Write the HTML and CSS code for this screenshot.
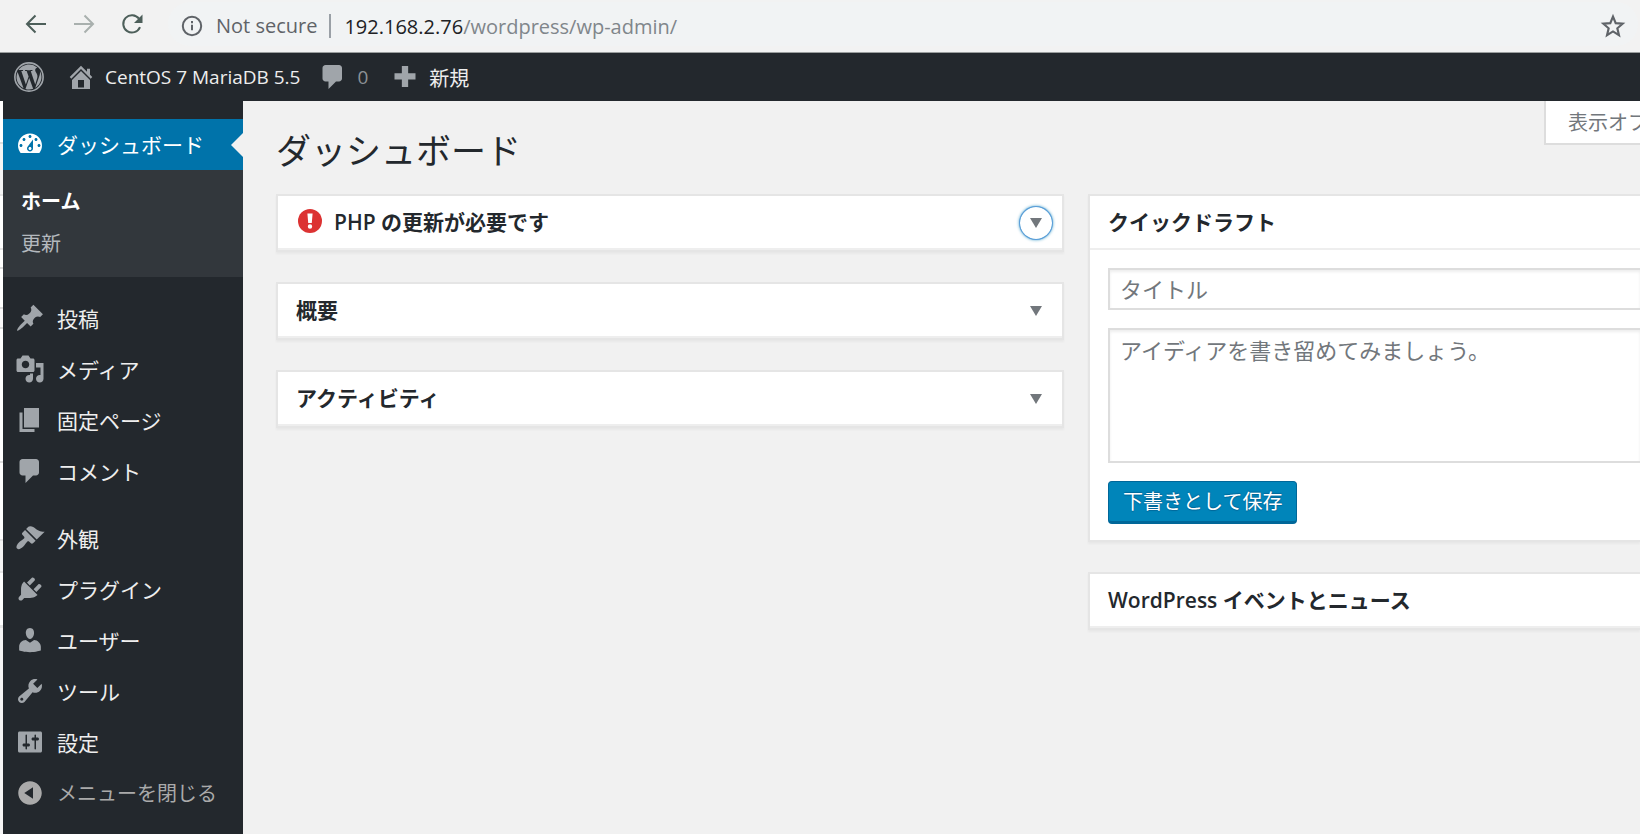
FILE: index.html
```html
<!DOCTYPE html>
<html lang="ja">
<head>
<meta charset="utf-8">
<title>ダッシュボード</title>
<link rel="stylesheet" href="styles.css">
</head>
<body>
<header class="browser">
  <div class="browser-nav">
    <button class="nav-btn" aria-label="Back"><svg viewBox="0 0 24 24"><path d="M22 12H3M11.500 3.500L3 12l8.500 8.500"/></svg></button>
    <button class="nav-btn nav-off" aria-label="Forward"><svg viewBox="0 0 24 24"><path d="M2 12h19M12.500 3.500L21 12l-8.500 8.500"/></svg></button>
    <button class="nav-btn" aria-label="Reload"><svg viewBox="0 0 24 24"><path d="M20 15.200A8.700 8.700 0 1 1 19 6.700"/><path class="solid" d="M22.500 2.500v8.500h-8.500z"/></svg></button>
  </div>
  <div class="omnibox">
    <svg class="info" viewBox="0 0 22 22"><circle cx="11" cy="11" r="9.200"/><path d="M11 9.800v5.400M11 6v2.300"/></svg>
    <span class="secure">Not secure</span>
    <span class="url"><b>192.168.2.76</b>/wordpress/wp-admin/</span>
    <button class="star" aria-label="Bookmark"><svg viewBox="0 0 24 24"><path d="M12 3.400l2.500 6 6.400.5-4.900 4.200 1.500 6.300-5.500-3.400-5.500 3.400 1.500-6.300-4.900-4.200 6.400-.5z"/></svg></button>
  </div>
</header>

<nav class="adminbar">
  <a href="#" class="bar-item" aria-label="WordPress"><svg class="icon wp" viewBox="0 0 24 24"><circle cx="12" cy="12" r="11.300"/><path transform="translate(.9 .9) scale(.925)" d="M21.469 6.825c.84 1.537 1.318 3.3 1.318 5.175 0 3.979-2.156 7.456-5.363 9.325l3.295-9.527c.615-1.54.82-2.771.82-3.864 0-.405-.026-.78-.07-1.11m-7.981.105c.647-.03 1.232-.105 1.232-.105.582-.075.514-.93-.067-.899 0 0-1.755.135-2.88.135-1.064 0-2.85-.15-2.85-.15-.585-.03-.661.855-.075.885 0 0 .54.061 1.125.09l1.68 4.605-2.37 7.08L5.354 6.9c.649-.03 1.234-.1 1.234-.1.585-.075.516-.93-.065-.896 0 0-1.746.138-2.874.138-.2 0-.438-.008-.69-.015C4.911 3.15 8.235 1.215 12 1.215c2.809 0 5.365 1.072 7.286 2.833-.046-.003-.091-.009-.141-.009-1.06 0-1.812.923-1.812 1.914 0 .89.513 1.643 1.06 2.531.411.72.89 1.643.89 2.977 0 .915-.354 1.994-.821 3.479l-1.075 3.585-3.9-11.61.001.014zM12 22.784c-1.059 0-2.081-.153-3.048-.437l3.237-9.406 3.315 9.087c.024.053.05.101.078.149-1.12.393-2.325.609-3.582.609M1.211 12c0-1.564.336-3.05.935-4.39L7.29 21.709C3.694 19.96 1.212 16.271 1.211 12"/></svg></a>
  <a href="#" class="bar-item site"><svg class="icon" viewBox="0 0 20 20"><path d="M16 8.500l1.530 1.530-1.060 1.060L10 4.600l-6.470 6.490-1.060-1.060L10 2.500l4 4v-2h2v4zm-6-2.460l6 5.990V18H4v-5.970zM12 17v-5H8v5h4z"/></svg>CentOS 7 MariaDB 5.5</a>
  <a href="#" class="bar-item count"><svg class="icon" viewBox="0 0 20 20"><path d="M5 2h9c1.100 0 2 .9 2 2v7c0 1.100-.9 2-2 2h-2l-5 5v-5H5c-1.100 0-2-.9-2-2V4c0-1.100.9-2 2-2z"/></svg>0</a>
  <a href="#" class="bar-item new"><svg class="icon" viewBox="0 0 20 20"><path d="M17 7.500v4.200h-4.900v4.900H7.900v-4.900H3V7.500h4.900V2.700h4.200v4.800z"/></svg>新規</a>
</nav>

<div class="shell">
  <nav class="menu">
    <a href="#" class="menu-item current"><svg class="icon" viewBox="0 0 20 20"><path d="M3.760 16h12.480c1.100-1.370 1.760-3.110 1.760-5 0-4.420-3.580-8-8-8s-8 3.580-8 8c0 1.890.66 3.630 1.760 5zM10 4c.55 0 1 .45 1 1s-.45 1-1 1-1-.45-1-1 .45-1 1-1zM6 6c.55 0 1 .45 1 1s-.45 1-1 1-1-.45-1-1 .45-1 1-1zm8 0c.55 0 1 .45 1 1s-.45 1-1 1-1-.45-1-1 .45-1 1-1zm-5.370 5.550L12 7v6c0 1.100-.9 2-2 2s-2-.9-2-2c0-.57.24-1.080.63-1.450zM4 10c.55 0 1 .45 1 1s-.45 1-1 1-1-.45-1-1 .45-1 1-1zm12 0c.55 0 1 .45 1 1s-.45 1-1 1-1-.45-1-1 .45-1 1-1zm-5 3c0-.55-.45-1-1-1s-1 .45-1 1 .45 1 1 1 1-.45 1-1z" fill-rule="evenodd"/></svg>ダッシュボード</a>
    <div class="submenu">
      <a href="#" class="sub-item sub-current">ホーム</a>
      <a href="#" class="sub-item">更新</a>
    </div>
    <div class="group">
      <a href="#" class="menu-item"><svg class="icon" viewBox="0 0 20 20"><path d="M10.440 3.020l1.820-1.820 6.360 6.350-1.830 1.820c-1.050-.68-2.480-.57-3.410.36l-.75.75c-.92.93-1.040 2.350-.35 3.410l-1.830 1.820-2.410-2.410-2.800 2.790c-.42.42-3.380 2.710-3.800 2.290s1.860-3.390 2.280-3.810l2.790-2.790L4.100 9.360l1.830-1.820c1.050.69 2.480.57 3.400-.36l.75-.75c.93-.92 1.050-2.350.36-3.410z"/></svg>投稿</a>
      <a href="#" class="menu-item"><svg class="icon" viewBox="0 0 20 20"><path fill-rule="evenodd" d="M13 11V4c0-.55-.45-1-1-1h-1.670L9 1H5L3.670 3H2c-.55 0-1 .45-1 1v7c0 .55.45 1 1 1h10c.55 0 1-.45 1-1zM7 4.500c1.380 0 2.500 1.120 2.500 2.500S8.380 9.500 7 9.500 4.500 8.380 4.500 7 5.620 4.500 7 4.500zM14 6h5v10.500c0 1.380-1.120 2.500-2.500 2.500S14 17.880 14 16.500s1.120-2.500 2.500-2.500c.17 0 .34.02.5.05V9h-3V6zm-4 8.050V13h2v3.500c0 1.380-1.120 2.500-2.500 2.500S7 17.880 7 16.500 8.120 14 9.500 14c.17 0 .34.02.5.05z"/></svg>メディア</a>
      <a href="#" class="menu-item"><svg class="icon" viewBox="0 0 20 20"><path d="M6 15V2h10v13H6zm-1 1h8v2H3V5h2v11z"/></svg>固定ページ</a>
      <a href="#" class="menu-item"><svg class="icon" viewBox="0 0 20 20"><path d="M5 2h9c1.100 0 2 .9 2 2v7c0 1.100-.9 2-2 2h-2l-5 5v-5H5c-1.100 0-2-.9-2-2V4c0-1.100.9-2 2-2z"/></svg>コメント</a>
    </div>
    <div class="group">
      <a href="#" class="menu-item"><svg class="icon" viewBox="0 0 20 20"><path d="M14.480 11.060L7.410 3.990l1.500-1.500c.5-.56 2.300-.47 3.510.32 1.210.8 1.430 1.280 2.910 2.100 1.180.64 2.450 1.260 4.450.85zm-.71.71L6.700 4.700 4.930 6.470c-.39.39-.39 1.020 0 1.410l1.060 1.060c.39.39.39 1.030 0 1.420-.6.6-1.430 1.110-2.210 1.690-.35.26-.7.53-1.010.84C1.430 14.230.4 16.080 1.400 17.070c.99 1 2.840-.03 4.180-1.360.31-.31.58-.66.85-1.020.57-.78 1.080-1.610 1.690-2.210.39-.39 1.020-.39 1.410 0l1.060 1.060c.39.39 1.020.39 1.410 0z"/></svg>外観</a>
      <a href="#" class="menu-item"><svg class="icon" viewBox="0 0 20 20"><path d="M13.110 4.360L9.870 7.600 8 5.730l3.240-3.240c.35-.34 1.050-.2 1.560.32.52.51.66 1.210.31 1.550zm-8 1.770l.91-1.120 9.010 9.010-1.190.84c-.71.71-2.630 1.160-3.820 1.160H6.140L4.900 17.260c-.59.59-1.540.59-2.120 0-.59-.58-.59-1.530 0-2.120l1.240-1.240v-3.880c0-1.130.4-3.190 1.090-3.890zm7.260 3.970l3.240-3.240c.34-.35 1.040-.21 1.550.31.52.51.66 1.210.31 1.550l-3.240 3.250z"/></svg>プラグイン</a>
      <a href="#" class="menu-item"><svg class="icon" viewBox="0 0 20 20"><path d="M10 9.250c-2.270 0-2.730-3.440-2.730-3.440C7 4.020 7.820 2 9.970 2c2.160 0 2.980 2.020 2.710 3.810 0 0-.41 3.440-2.680 3.440zm0 2.570L12.720 10c2.390 0 4.520 2.330 4.520 4.530v2.490s-3.650 1.130-7.240 1.130c-3.650 0-7.240-1.130-7.240-1.130v-2.490c0-2.250 1.940-4.480 4.470-4.480z"/></svg>ユーザー</a>
      <a href="#" class="menu-item"><svg class="icon" viewBox="0 0 20 20"><path fill-rule="evenodd" d="M16.680 9.770c-1.340 1.340-3.300 1.670-4.950.99l-5.410 6.520c-.99.99-2.590.99-3.580 0s-.99-2.590 0-3.570l6.520-5.420c-.68-1.650-.35-3.610.99-4.950 1.280-1.280 3.120-1.620 4.720-1.060l-2.890 2.890 2.820 2.820 2.860-2.870c.53 1.580.18 3.390-1.080 4.650zM3.810 16.210c.4.39 1.040.39 1.430 0 .4-.4.4-1.040 0-1.430-.39-.4-1.030-.4-1.430 0-.39.39-.39 1.030 0 1.430z"/></svg>ツール</a>
      <a href="#" class="menu-item"><svg class="icon" viewBox="0 0 20 20"><path fill-rule="evenodd" d="M18 16V4c0-.55-.45-1-1-1H3c-.55 0-1 .45-1 1v12c0 .55.45 1 1 1h14c.55 0 1-.45 1-1zM8 11h1c.55 0 1 .45 1 1s-.45 1-1 1H8v1.500c0 .28-.22.5-.5.5s-.5-.22-.5-.5V13H6c-.55 0-1-.45-1-1s.45-1 1-1h1V5.500c0-.28.22-.5.5-.5s.5.22.5.5V11zm5-2h-1c-.55 0-1-.45-1-1s.45-1 1-1h1V5.500c0-.28.22-.5.5-.5s.5.22.5.5V7h1c.55 0 1 .45 1 1s-.45 1-1 1h-1v5.500c0 .28-.22.5-.5.5s-.5-.22-.5-.5V9z"/></svg>設定</a>
      <button class="menu-item collapse"><svg class="icon" viewBox="0 0 20 20"><path fill-rule="evenodd" d="M10 2.160c4.330 0 7.840 3.510 7.840 7.840s-3.510 7.840-7.840 7.840S2.160 14.330 2.160 10 5.710 2.160 10 2.160zm2 11.720V6.120L6.180 9.970z"/></svg>メニューを閉じる</button>
    </div>
  </nav>

  <main class="content">
    <button class="screen-options">表示オプション</button>
    <h1 class="title">ダッシュボード</h1>
    <div class="columns">
      <div class="column">
        <section class="box">
          <div class="box-head">
            <h2 class="box-title"><svg class="warn" viewBox="0 0 24 24"><circle cx="12" cy="12" r="12"/><path d="M9.400 4.500h5.200l-.8 9.500h-3.600zM12 15.300a2.200 2.200 0 1 1 0 4.400 2.200 2.200 0 0 1 0-4.400z"/></svg>PHP の更新が必要です</h2>
            <button class="toggle focused" aria-label="開閉"><svg viewBox="0 0 12 10"><path d="M0 0h12L6 10z"/></svg></button>
          </div>
        </section>
        <section class="box">
          <div class="box-head">
            <h2 class="box-title">概要</h2>
            <button class="toggle" aria-label="開閉"><svg viewBox="0 0 12 10"><path d="M0 0h12L6 10z"/></svg></button>
          </div>
        </section>
        <section class="box">
          <div class="box-head">
            <h2 class="box-title">アクティビティ</h2>
            <button class="toggle" aria-label="開閉"><svg viewBox="0 0 12 10"><path d="M0 0h12L6 10z"/></svg></button>
          </div>
        </section>
      </div>
      <div class="column">
        <section class="box box-open">
          <div class="box-head"><h2 class="box-title">クイックドラフト</h2></div>
          <form class="draft">
            <input class="field" type="text" aria-label="タイトル" placeholder="タイトル">
            <textarea class="field area" aria-label="コンテンツ" placeholder="アイディアを書き留めてみましょう。"></textarea>
            <button class="save" type="button">下書きとして保存</button>
          </form>
        </section>
        <section class="box box-open">
          <div class="box-head"><h2 class="box-title">WordPress イベントとニュース</h2></div>
        </section>
      </div>
    </div>
  </main>
</div>
</body>
</html>
```
FILE: styles.css
```css
* { box-sizing: border-box; }

body {
  margin: 0;
  min-height: 100vh;
  display: flex;
  flex-direction: column;
  overflow: hidden;
  background: #f1f1f1;
  color: #23282d;
  font-family: "Open Sans", "Noto Sans CJK JP", sans-serif;
  font-size: 21px;
}

a { color: inherit; text-decoration: none; }
h1, h2 { margin: 0; }

button {
  border: 0;
  padding: 0;
  background: none;
  color: inherit;
  font: inherit;
}

/* Browser toolbar */
.browser {
  display: flex;
  align-items: center;
  height: 53px;
  padding: 0 2px 4px 24px;
  background: #f2f2f2;
  border-bottom: 1px solid #9a9e9e;
}

.browser-nav { display: flex; gap: 24px; }
.nav-btn { width: 24px; height: 24px; }

.nav-btn svg {
  display: block;
  fill: none;
  stroke: #4d5f5a;
  stroke-width: 2;
}

.nav-btn .solid { fill: #4d5f5a; stroke: none; }
.nav-off svg { stroke: #a9b0ae; }

.omnibox {
  flex: 1;
  display: flex;
  align-items: center;
  height: 44px;
  margin-left: 24px;
  padding: 4px 12px 0 13px;
  border-radius: 22px;
  background: #f1f3f4;
  font-size: 20px;
}

.info { width: 22px; fill: none; stroke: #5f6368; stroke-width: 2; }

.secure {
  margin-left: 13px;
  padding-right: 12px;
  border-right: 2px solid #9aa0a6;
  color: #5f6368;
  line-height: 24px;
}

.url { flex: 1; margin-left: 13px; color: #80868b; }
.url b { color: #202124; font-weight: 400; }
.star { width: 26px; height: 26px; }
.star svg { display: block; fill: none; stroke: #5f6368; stroke-width: 2; }

/* Admin bar */
.adminbar {
  display: flex;
  height: 48px;
  padding-left: 14px;
  background: #23282d;
  color: #eee;
  font-size: 19px;
}

.bar-item { display: flex; align-items: center; gap: 9px; margin-right: 22px; }
.icon { flex: none; width: 30px; height: 30px; fill: #a0a5aa; }
.wp circle { fill: none; stroke: #a0a5aa; stroke-width: 1.3; }
.site { margin-right: 18px; }
.count { color: #8c9196; }
.new { font-size: 20px; }

/* Side menu */
.shell {
  flex: 1;
  display: flex;
  padding-left: 3px;
  background: linear-gradient(
    #fff 41px, #ddd 41px 43px, #f5f5f5 43px 93px, #e5e5e5 93px 95px,
    #fff 95px 147px, #e5e5e5 147px 149px, #fff 149px 166px, #ddd 166px 168px,
    #fff 168px 206px, #ddd 206px 208px, #f9f9f9 208px 226px, #ddd 226px 228px,
    #fff 228px 360px, #ddd 360px 362px, #fff 362px 438px, #e5e5e5 438px 440px,
    #f5f5f5 440px 470px, #e5e5e5 470px 472px, #fff 472px 524px,
    #e5e5e5 524px 527px, #f5f5f5 527px);
}

.menu {
  flex: none;
  width: 240px;
  padding-top: 18px;
  background: #23282d;
  color: #eee;
}

.menu-item {
  display: flex;
  align-items: center;
  gap: 12px;
  width: 100%;
  height: 51px;
  padding: 0 12px 2px;
}

.current { position: relative; background: #0073aa; color: #fff; }
.current .icon { fill: #fff; }

.current::after {
  content: "";
  position: absolute;
  right: 0;
  top: 14px;
  border: 12px solid transparent;
  border-left-width: 0;
  border-right-color: #f1f1f1;
}

.submenu { padding: 11px 0 12px; background: #32373c; font-size: 20px; }
.sub-item { display: block; padding: 0 18px; color: #b4b9be; line-height: 42px; }
.sub-current { color: #fff; font-weight: 700; }
.group { padding-top: 16px; }
.collapse { color: #aaa; font-size: 20px; }
.collapse .icon { fill: #aaa; }

/* Content */
.content {
  position: relative;
  flex: 1;
  min-width: 0;
  padding: 28px 0 0 33px;
  overflow: hidden;
  background: #f1f1f1;
}

.screen-options {
  position: absolute;
  top: 0;
  right: -94px;
  height: 44px;
  padding: 0 24px 2px 22px;
  border: 2px solid #ddd;
  border-top: 0;
  background: #fff;
  color: #72777c;
  font-size: 20px;
  white-space: nowrap;
}

.title { font-size: 35px; font-weight: 400; line-height: 44px; }

.columns {
  display: grid;
  grid-template-columns: minmax(0, 788fr) minmax(0, 552fr);
  gap: 24px;
  margin-top: 21px;
}

.column { display: flex; flex-direction: column; gap: 30px; }

.box {
  border: 2px solid #e5e5e5;
  background: #fff;
  box-shadow: 0 2px 2px rgba(0, 0, 0, .04);
}

.box-open { border-right: 0; }

.box-head {
  display: flex;
  align-items: center;
  justify-content: space-between;
  height: 54px;
  padding: 2px 10px 0 18px;
  border-bottom: 2px solid #eee;
}

.box-title {
  display: flex;
  align-items: center;
  padding-bottom: 5px;
  font-size: 21px;
  font-weight: 600;
}

.warn { width: 24px; margin: 0 12px 0 2px; fill: #dc3232; }
.warn path { fill: #fff; }
.toggle { display: grid; place-items: center; width: 32px; height: 32px; border-radius: 50%; }
.toggle svg { width: 12px; fill: #72777c; }
.focused { box-shadow: 0 0 0 1px #5b9dd9, 0 0 3px 1px rgba(30, 140, 190, .8); }

.draft {
  display: flex;
  flex-direction: column;
  align-items: flex-start;
  gap: 18px;
  padding: 18px 0 16px 18px;
}

.field {
  width: 100%;
  height: 42px;
  padding: 0 10px;
  border: 2px solid #ddd;
  border-right: 0;
  box-shadow: inset 0 2px 3px rgba(0, 0, 0, .07);
  font: inherit;
  font-size: 22px;
}

.field::placeholder { color: #72777c; opacity: 1; }
.area { height: 135px; padding: 5px 10px; resize: none; line-height: 30px; }

.save {
  height: 43px;
  padding: 0 14px 2px;
  border: 1px solid #006799;
  border-bottom-width: 3px;
  border-radius: 4px;
  background: #0085ba;
  color: #fff;
  font-size: 20px;
  text-shadow: 0 -1px 1px #006799, 0 1px 1px #006799;
}
```
